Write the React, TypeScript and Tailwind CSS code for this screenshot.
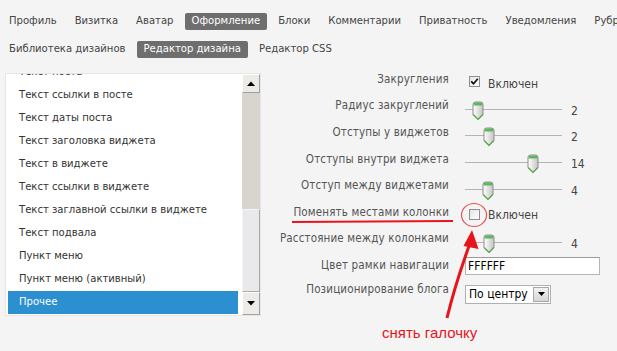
import React from "react";

const navRow1 = [
  { t: "Профиль" },
  { t: "Визитка" },
  { t: "Аватар" },
  { t: "Оформление", a: true },
  { t: "Блоки" },
  { t: "Комментарии" },
  { t: "Приватность" },
  { t: "Уведомления" },
  { t: "Рубрики" },
];
const navRow2 = [
  { t: "Библиотека дизайнов" },
  { t: "Редактор дизайна", a: true },
  { t: "Редактор CSS" },
];

const listItems = [
  "Текст поста",
  "Текст ссылки в посте",
  "Текст даты поста",
  "Текст заголовка виджета",
  "Текст в виджете",
  "Текст ссылки в виджете",
  "Текст заглавной ссылки в виджете",
  "Текст подвала",
  "Пункт меню",
  "Пункт меню (активный)",
  "Прочее",
];

function NavItem({ t, a }: { t: string; a?: boolean }) {
  return (
    <span
      className={
        a
          ? "h-[17px] px-[7px] flex items-center rounded-[2px] bg-[#6e6e6e] text-white whitespace-nowrap"
          : "h-[17px] px-[7px] flex items-center text-[#454545] whitespace-nowrap"
      }
    >
      {t}
    </span>
  );
}

function Thumb() {
  return (
    <svg width="12" height="20" viewBox="0 0 12 20">
      <defs>
        <linearGradient id="tg" x1="0" x2="1" y1="0" y2="0">
          <stop offset="0" stopColor="#ffffff" />
          <stop offset="1" stopColor="#c4c4c4" />
        </linearGradient>
      </defs>
      <path
        d="M1 3.5 Q1 1 3.5 1 H8.5 Q11 1 11 3.5 V13.5 L6 18.5 L1 13.5 Z"
        fill="url(#tg)"
        stroke="#8c8c8c"
        strokeWidth="1"
      />
      <path d="M1.5 4.5 Q1.5 1.5 3.5 1.5 H8.5 Q10.5 1.5 10.5 4.5 Z" fill="#5cb85c" />
      <path d="M1.2 13.5 L6 18.5 L10.8 13.5" fill="none" stroke="#5aa84a" strokeWidth="1.2" />
    </svg>
  );
}

function Slider({ pos, value }: { pos: number; value: string }) {
  return (
    <div className="flex items-center mt-[9px]">
      <div className="relative w-[97px] h-[20px]">
        <div className="absolute left-0 right-0 top-[8px] h-px bg-[#b4b4b4]" />
        <div className="absolute top-0" style={{ left: pos }}>
          <Thumb />
        </div>
      </div>
      <span className="ml-[9px] text-[#444] text-[12px]">{value}</span>
    </div>
  );
}

function Checkbox({ checked }: { checked?: boolean }) {
  return (
    <div className="w-[11px] h-[11px] border border-[#8f8f8f] bg-gradient-to-br from-[#e4e4e4] to-white flex items-center justify-center">
      {checked && (
        <svg width="9" height="9" viewBox="0 0 9 9">
          <path d="M1.2 4.3 L3.5 6.7 L7.8 1.8" fill="none" stroke="#111" strokeWidth="1.7" />
        </svg>
      )}
    </div>
  );
}

function Row({ label, h, children }: { label: string; h: string; children: React.ReactNode }) {
  return (
    <div className={`flex items-center ${h}`}>
      <div className="w-[179px] text-right text-[#555] text-[11.5px] tracking-[0.15px] whitespace-nowrap">{label}</div>
      <div className="ml-[16px] flex items-center">{children}</div>
    </div>
  );
}

export default function App() {
  return (
    <div
      className="relative w-[617px] h-[351px] overflow-hidden bg-[#f4f4f4] text-[11.5px]"
      style={{ fontFamily: "'DejaVu Sans Condensed', 'Noto Sans', sans-serif" }}
    >
      <div className="pt-[13px] pl-[2px] text-[11.2px]">
        <div className="flex gap-[4px]">
          {navRow1.map((n) => (
            <NavItem key={n.t} t={n.t} a={n.a} />
          ))}
        </div>
        <div className="flex gap-[4px] mt-[11px]">
          {navRow2.map((n) => (
            <NavItem key={n.t} t={n.t} a={n.a} />
          ))}
        </div>
      </div>

      <div className="flex mt-[8px]">
        <div className="ml-[5px] mt-[7px] w-[256px] h-[243px] bg-white flex border border-[#e6e6e6]">
          <div className="flex-1 overflow-hidden pl-[2px] pr-[4px]">
            <div className="-mt-[13px]">
              {listItems.map((it) => (
                <div
                  key={it}
                  className={
                    it === "Прочее"
                      ? "h-[23px] flex items-center pl-[11px] bg-[#2b8fd0] text-white text-[11.2px]"
                      : "h-[23px] flex items-center pl-[11px] text-[#333] text-[11.2px]"
                  }
                >
                  {it}
                </div>
              ))}
            </div>
          </div>
          <div className="w-[18px] flex flex-col bg-[#d8d5cf]">
            <div className="h-[19px] bg-[#ecebe8] border border-[#a0a0a0] border-t-white border-l-white flex items-center justify-center">
              <svg width="8" height="5" viewBox="0 0 8 5">
                <path d="M0 5 L4 0.5 L8 5 Z" fill="#000" />
              </svg>
            </div>
            <div className="flex-1" />
            <div className="h-[83px] bg-[#e9e9ec] border border-[#a9a9a9] border-t-[#f4f4f4] border-l-[#f4f4f4]" />
            <div className="h-[23px] bg-[#ecebe8] border border-[#a0a0a0] border-t-white border-l-white flex items-center justify-center">
              <svg width="8" height="5" viewBox="0 0 8 5">
                <path d="M0 0 L4 4.5 L8 0 Z" fill="#000" />
              </svg>
            </div>
          </div>
        </div>

        <div className="ml-[9px] flex flex-col">
          <Row label="Закругления" h="h-[27px]">
            <div className="flex items-center mt-[4px] ml-[4px]">
              <Checkbox checked />
              <span className="ml-[8px] mt-[4px] text-[#444] text-[12px]">Включен</span>
            </div>
          </Row>
          <Row label="Радиус закруглений" h="h-[26px]">
            <Slider pos={7} value="2" />
          </Row>
          <Row label="Отступы у виджетов" h="h-[27px]">
            <Slider pos={18} value="2" />
          </Row>
          <Row label="Отступы внутри виджета" h="h-[27px]">
            <Slider pos={62} value="14" />
          </Row>
          <Row label="Отступ между виджетами" h="h-[26px]">
            <Slider pos={17} value="4" />
          </Row>
          <Row label="Поменять местами колонки" h="h-[27px]">
            <div className="flex items-center mt-[3px] ml-[4px]">
              <Checkbox />
              <span className="ml-[8px] mt-[2px] text-[#444] text-[12px]">Включен</span>
            </div>
          </Row>
          <Row label="Расстояние между колонками" h="h-[26px]">
            <Slider pos={18} value="4" />
          </Row>
          <Row label="Цвет рамки навигации" h="h-[27px]">
            <div className="w-[135px] h-[18px] mt-[1px] bg-white border border-[#b5b5b5] border-t-[#9a9a9a] flex items-center pl-[2px] text-[12px] text-black">
              FFFFFF
            </div>
          </Row>
          <Row label="Позиционирование блога" h="h-[22px]">
            <div className="w-[86px] h-[19px] mt-[8px] bg-white border border-[#b0b0b0] flex items-center text-[12px] text-black">
              <span className="flex-1 pl-[3px] whitespace-nowrap">По центру</span>
              <div className="w-[16px] h-[15px] mr-[1px] bg-gradient-to-b from-[#f2f2f2] to-[#d6d6d6] border border-[#a8a8a8] flex items-center justify-center">
                <svg width="7" height="4" viewBox="0 0 7 4">
                  <path d="M0 0 L3.5 4 L7 0 Z" fill="#000" />
                </svg>
              </div>
            </div>
          </Row>
        </div>
      </div>

      <svg className="absolute left-0 top-0 pointer-events-none" width="617" height="351">
        <path d="M292 222 Q370 221.5 453 221" stroke="#e8141c" strokeWidth="2" fill="none" />
        <ellipse cx="474" cy="215" rx="12.5" ry="11.5" stroke="#e25555" strokeWidth="1.2" fill="none" />
        <path d="M447 318 Q455 285 469 246" stroke="#e8141c" strokeWidth="3" fill="none" />
        <path d="M472 230 L478.5 249 L463.5 246 Z" fill="#e8141c" />
      </svg>
      <div
        className="absolute left-[382px] top-[324px] text-[15px] leading-[18px] text-[#e8141c] whitespace-nowrap"
        style={{ fontFamily: "'Liberation Sans', Arial, sans-serif" }}
      >
        снять галочку
      </div>
    </div>
  );
}
